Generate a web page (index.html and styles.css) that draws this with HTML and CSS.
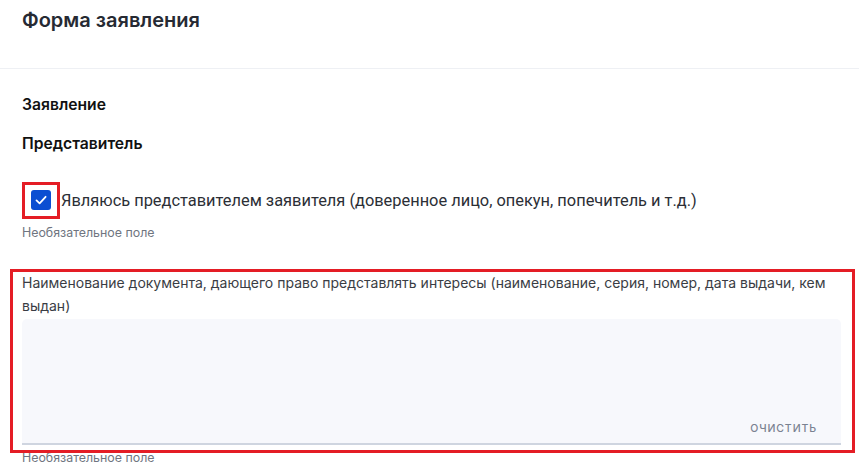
FILE: index.html
```html
<!DOCTYPE html>
<html lang="ru">
<head>
<meta charset="utf-8">
<title>Форма заявления</title>
<link rel="stylesheet" href="styles.css">
</head>
<body>
<header class="page-header">
  <h1 class="page-title">Форма заявления</h1>
</header>
<main class="content">
  <h2 class="section-title first">Заявление</h2>
  <h2 class="section-title">Представитель</h2>

  <label class="check-row">
    <span class="check-mark-wrap">
      <span class="check-box">
        <svg width="14" height="14" viewBox="0 0 14 14" aria-hidden="true"><path d="M2.5 7.4 L5.6 10.3 L11.6 3.8" fill="none" stroke="#fff" stroke-width="1.8" stroke-linecap="round" stroke-linejoin="round"/></svg>
      </span>
    </span>
    <span class="check-label">Являюсь представителем заявителя (доверенное лицо, опекун, попечитель и т.д.)</span>
  </label>
  <div class="hint hint-check">Необязательное поле</div>

  <div class="field">
    <div class="field-label">Наименование документа, дающего право представлять интересы (наименование, серия, номер, дата выдачи, кем выдан)</div>
    <div class="textarea-wrap">
      <textarea class="textarea"></textarea>
      <button class="clear-btn" type="button">Очистить</button>
    </div>
  </div>
  <div class="hint hint-field">Необязательное поле</div>
</main>
</body>
</html>
```

FILE: styles.css
```css
* { box-sizing: border-box; }
html, body { margin: 0; padding: 0; background: #fff; }
body {
  font-family: Inter, "Noto Sans", "Liberation Sans", sans-serif;
  color: #1f2329;
  overflow: hidden;
}
.page-header {
  height: 69px;
  border-bottom: 1px solid #eef0f4;
  padding: 7px 22px 0;
}
.page-title {
  margin: 0;
  font-size: 20px;
  line-height: 26px;
  font-weight: 600;
  color: #262a33;
}
.content {
  padding: 0 18px 0 22px;
}
.section-title {
  margin: 0;
  font-size: 15.7px;
  line-height: 20px;
  font-weight: 600;
  color: #111;
}
.section-title.first { margin-top: 26px; }
.section-title + .section-title { margin-top: 19px; }

.check-row {
  display: flex;
  align-items: center;
  margin-top: 28px;
}
.check-mark-wrap {
  display: inline-flex;
  padding: 5px 6px 6px 6px;
  border: 3px solid #e41d25;
  margin-right: 1px;
}
.check-box {
  width: 20px;
  height: 20px;
  border-radius: 3px;
  background: #0b4ed2;
  display: flex;
  align-items: center;
  justify-content: center;
}
.check-label {
  font-family: Roboto, "Liberation Sans", sans-serif;
  font-size: 16.4px;
  color: #2c2f36;
}
.hint {
  font-size: 12.4px;
  line-height: 16px;
  color: #6f7580;
}
.hint-check { margin-top: 6px; }

.field {
  position: relative;
  margin-top: 30px;
}
.field::after {
  content: "";
  position: absolute;
  left: -12px;
  right: -14px;
  top: -2px;
  bottom: -8px;
  border: 3px solid #e41d25;
  pointer-events: none;
}
.field-label {
  font-size: 14px;
  line-height: 23px;
  color: #3a3d44;
}
.textarea-wrap {
  position: relative;
  margin-top: 2px;
}
.textarea {
  display: block;
  width: 100%;
  height: 126px;
  border: 0;
  border-bottom: 2px solid #cfd5e0;
  border-radius: 5px 5px 0 0;
  background: #f7f8fc;
  resize: none;
  outline: none;
  font-family: inherit;
}
.clear-btn {
  position: absolute;
  right: 24px;
  bottom: 10px;
  border: 0;
  background: none;
  padding: 0;
  font-family: inherit;
  font-size: 10.5px;
  font-weight: 500;
  letter-spacing: 0.9px;
  text-transform: uppercase;
  color: #7a8291;
}
.hint-field { margin-top: 5px; }
```
